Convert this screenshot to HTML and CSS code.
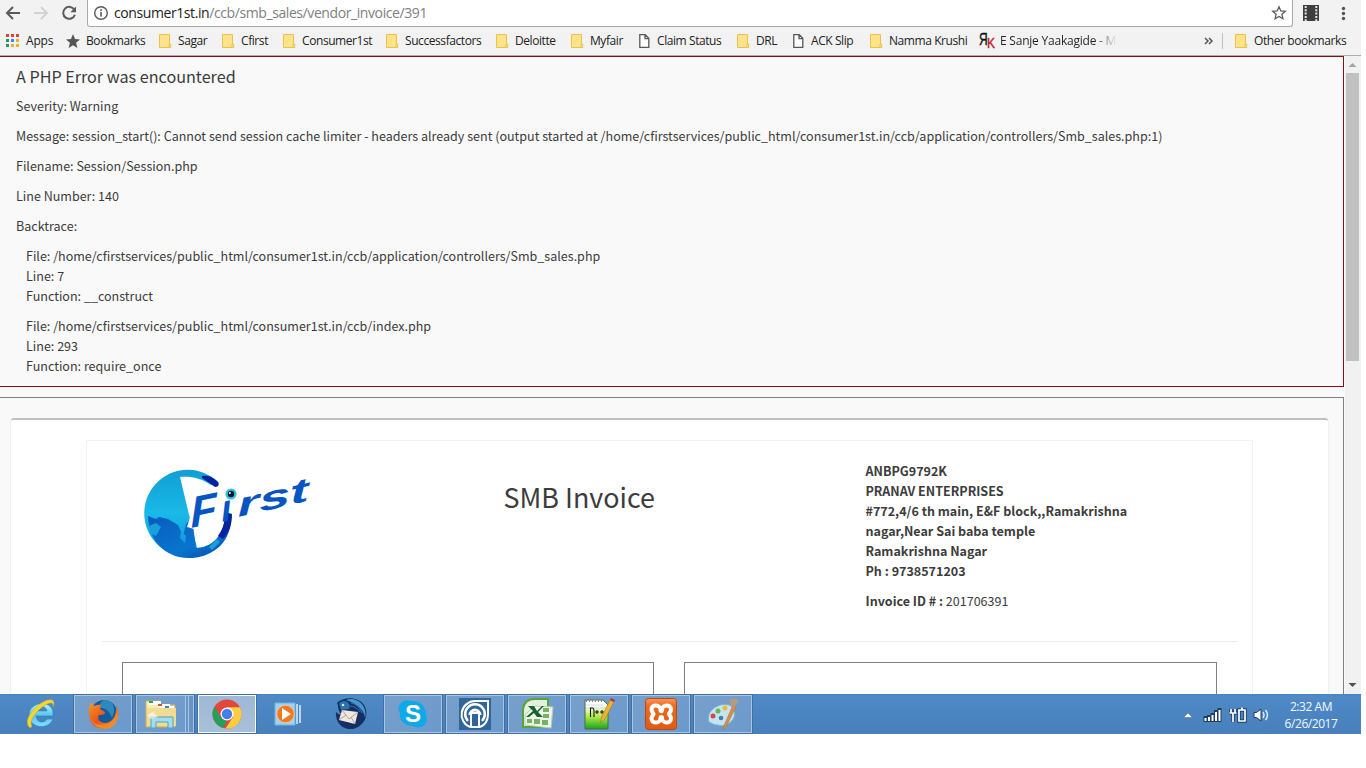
FILE: index.html
```html
<!DOCTYPE html>
<html lang="en">
<head>
<meta charset="utf-8">
<title>SMB Invoice</title>
<link rel="stylesheet" href="styles.css">
</head>
<body>
<svg class="defs" width="0" height="0">
  <defs>
    <symbol id="folder" viewBox="0 0 13 15"><path d="M.5.5h10v9.500h1.200v3.500H.5z" fill="#ffe38b" stroke="#e9c34c"/><path d="M10 10v3.500" stroke="#e9c34c"/></symbol>
    <symbol id="doc" viewBox="0 0 13 15"><path d="M.8.7h5.400l3.600 3.600v9.100H.8zM6 .7v3.900h3.800" fill="#fff" stroke="#58585a" stroke-width="1.300"/></symbol>
    <linearGradient id="globe" x2="0" y2="1"><stop stop-color="#119fd2"/><stop offset=".5" stop-color="#19b9e8"/><stop offset="1" stop-color="#1496d8"/></linearGradient>
    <linearGradient id="sea" x2="1" y2="1"><stop stop-color="#095bbd"/><stop offset=".6" stop-color="#0875cf"/><stop offset="1" stop-color="#0646a9"/></linearGradient>
    <linearGradient id="iceE" x2="0" y2="1"><stop stop-color="#bdf1ff"/><stop offset=".5" stop-color="#57c5ef"/><stop offset="1" stop-color="#86def8"/></linearGradient>
    <linearGradient id="fire" x2="1" y2="1"><stop stop-color="#f59b22"/><stop offset=".5" stop-color="#e9531c"/><stop offset="1" stop-color="#f5b32f"/></linearGradient>
    <linearGradient id="note" x2="0" y2="1"><stop offset=".2" stop-color="#fff"/><stop offset=".55" stop-color="#b7ec4b"/><stop offset="1" stop-color="#16a51b"/></linearGradient>
    <linearGradient id="orange" x2="0" y2="1"><stop stop-color="#fa955b"/><stop offset=".25" stop-color="#ee6a1d"/><stop offset="1" stop-color="#df5b13"/></linearGradient>
    <linearGradient id="manila" x2="0" y2="1"><stop stop-color="#fff4bd"/><stop offset="1" stop-color="#e9cf76"/></linearGradient>
  </defs>
</svg>
<div class="screen">
  <header class="chrome">
    <div class="toolbar">
      <svg class="nav" width="88" height="27" fill="none" stroke="#5a5a5a" stroke-width="2">
        <path d="M20 13H7.500M13 7l-6 6 6 6"/>
        <path d="M34 13h12.500M41 7l6 6-6 6" stroke="#d2d2d2"/>
        <path d="M74.500 10a6 6 0 1 0 .4 4.700"/><path d="M76 6.500v5.700h-5.700z" fill="#5a5a5a" stroke="none"/>
      </svg>
      <div class="omnibox">
        <svg class="info" width="16" height="16" fill="none" stroke="#5a5a5a"><circle cx="8" cy="8" r="6.300" stroke-width="1.400"/><path d="M8 7v4.500M8 4.200v1.700" stroke-width="1.600"/></svg>
        <span class="url">consumer1st.in<span class="path">/ccb/smb_sales/vendor_invoice/391</span></span>
        <svg class="fav" width="16" height="16"><path d="M8 1.800l1.800 4.100 4.500.4-3.400 3 1 4.400L8 11.400l-3.900 2.300 1-4.400-3.400-3 4.500-.4z" fill="none" stroke="#5a5a5a" stroke-width="1.300"/></svg>
      </div>
      <svg class="menu" width="68" height="27">
        <path d="M10 5h16v16H10z" fill="#3e3e3e"/><path d="M12.700 6v15M23.300 6v15" stroke="#e8e8e8" stroke-width="2" stroke-dasharray="2 1.300"/>
        <g fill="#555"><circle cx="50.500" cy="8.500" r="1.700"/><circle cx="50.500" cy="13.500" r="1.700"/><circle cx="50.500" cy="18.500" r="1.700"/></g>
      </svg>
    </div>
    <nav class="bookmarks">
      <a class="bm"><svg width="14" height="14"><path d="M0 0h3v3H0zM5 0h3v3H5zM10 0h3v3h-3z" fill="#db4437"/><path d="M0 5h3v3H0zM0 10h3v3H0z" fill="#229a59"/><path d="M5 5h3v3H5z" fill="#4285f4"/><path d="M10 5h3v3h-3zM5 10h3v3H5zM10 10h3v3h-3z" fill="#e8b026"/></svg><span class="apps">Apps</span></a>
      <a class="bm"><svg width="14" height="15"><path d="M7 0l2 5 5 .4-3.900 3.400L11.400 14 7 11.200 2.600 14l1.300-5.200L0 5.400 5 5z" fill="#555"/></svg><span>Bookmarks</span></a>
      <a class="bm"><svg width="13" height="15"><use href="#folder"/></svg><span>Sagar</span></a>
      <a class="bm"><svg width="13" height="15"><use href="#folder"/></svg><span>Cfirst</span></a>
      <a class="bm"><svg width="13" height="15"><use href="#folder"/></svg><span>Consumer1st</span></a>
      <a class="bm"><svg width="13" height="15"><use href="#folder"/></svg><span>Successfactors</span></a>
      <a class="bm"><svg width="13" height="15"><use href="#folder"/></svg><span>Deloitte</span></a>
      <a class="bm"><svg width="13" height="15"><use href="#folder"/></svg><span>Myfair</span></a>
      <a class="bm page"><svg width="13" height="15"><use href="#doc"/></svg><span>Claim Status</span></a>
      <a class="bm"><svg width="13" height="15"><use href="#folder"/></svg><span>DRL</span></a>
      <a class="bm page"><svg width="13" height="15"><use href="#doc"/></svg><span>ACK Slip</span></a>
      <a class="bm"><svg width="13" height="15"><use href="#folder"/></svg><span>Namma Krushi</span></a>
      <a class="bm rk"><b class="ya">Я</b><b class="ka">K</b><span class="fade">E Sanje Yaakagide - M</span></a>
      <svg width="10" height="9"><path d="M1 1l3 3-3 3M5 1l3 3-3 3" fill="none" stroke="#555" stroke-width="1.500"/></svg>
      <i class="rule"></i>
      <a class="bm"><svg width="13" height="15"><use href="#folder"/></svg><span>Other bookmarks</span></a>
    </nav>
  </header>

  <div class="viewport">
    <main class="page">
      <section class="error">
        <h4>A PHP Error was encountered</h4>
        <p>Severity: Warning</p>
        <p class="message">Message: session_start(): Cannot send session cache limiter - headers already sent (output started at /home/cfirstservices/public_html/consumer1st.in/ccb/application/controllers/Smb_sales.php:1)</p>
        <p>Filename: Session/Session.php</p>
        <p>Line Number: 140</p>
        <p>Backtrace:</p>
        <p class="trace">File: /home/cfirstservices/public_html/consumer1st.in/ccb/application/controllers/Smb_sales.php<br>Line: 7<br>Function: __construct</p>
        <p class="trace">File: /home/cfirstservices/public_html/consumer1st.in/ccb/index.php<br>Line: 293<br>Function: require_once</p>
      </section>
      <section class="wrapper">
        <div class="panel">
          <div class="invoice">
            <div class="head">
              <svg class="logo" width="190" height="106" viewBox="0 0 190 106">
                <path d="M75 24A43.500 43.500 0 1 0 87 59l-6-1C80 77 67 89 53 89L36 18c11-1 21 1 31 8z" fill="url(#globe)"/>
                <path d="M4 57l8 3 3-2 9 2 10 6 5 11 3-12 6-6 4 30C67 89 80 77 81 58l6 1C87 91 57 103 35 98 15 93 5 77 4 57z" fill="url(#sea)"/>
                <path d="M5 67l7-3 5 4-5 9-5-2zM37 72l5 5-1 7-5-5zM65 88l8-8 3 3-8 8z" fill="#189fdd"/>
                <path d="M58 19l13 9c4 0 5-3 2-6-5-5-10-6-15-5zM81 53c0 10-2 17-7 24l5 3c6-6 9-14 9-25z" fill="#0624a0"/>
                <path d="M43 68l12-38h24l-1 30h-22l-6 10z" fill="#fff"/>
                <g class="wordmark" fill="#0755c4">
                  <text transform="translate(47 69) rotate(-12) skewX(-10)" font-size="43" textLength="27" lengthAdjust="spacingAndGlyphs">F</text>
                  <text transform="translate(78 63) rotate(-12) skewX(-8)" font-size="37">ı</text>
                  <text transform="translate(94 58) rotate(-13) skewX(-10)" font-size="33" textLength="73" lengthAdjust="spacingAndGlyphs">rst</text>
                </g>
                <circle cx="87" cy="35" r="5.600" fill="#37bfe0"/><circle cx="87" cy="35" r="3.200" fill="#07182c"/><circle cx="85.800" cy="34" r="1" fill="#fff"/>
              </svg>
              <h2>SMB Invoice</h2>
              <address>
                <b>ANBPG9792K</b><b>PRANAV ENTERPRISES</b><b>#772,4/6 th main, E&amp;F block,,Ramakrishna nagar,Near Sai baba temple</b><b>Ramakrishna Nagar</b><b>Ph : 9738571203</b>
                <p><strong>Invoice ID # :</strong> 201706391</p>
              </address>
            </div>
            <hr>
            <div class="parties"><div></div><div></div></div>
          </div>
        </div>
      </section>
    </main>
    <div class="scrollbar">
      <svg width="16" height="17"><path d="M3.500 11L7.500 7l4 4z" fill="#a3a3a3"/></svg>
      <div class="thumb"></div>
      <svg class="down" width="16" height="17"><path d="M3.500 6l4 4 4-4z" fill="#505050"/></svg>
    </div>
  </div>

  <footer class="taskbar">
    <div class="task"><svg width="32" height="34"><path d="M28 19H11c1 8 9 7 11 3h6c-5 12-24 9-24-4S26 2 28 15zM11 14h11c-1-6-10-6-11 0z" fill="url(#iceE)" stroke="#2588c4" stroke-width=".6"/><path d="M4 30C-4 21 18 0 27 3c3 1 2 5 1 7 0-3 0-4-2-4C19 6 2 22 7 29c-1 2-2 2-3 1z" fill="#f5d52f" stroke="#bca52b" stroke-width=".5"/></svg></div>
    <div class="task open"><svg width="32" height="34"><circle cx="17" cy="16" r="13" fill="#175a9b"/><path d="M17 3c9 0 13 8 8 18-2-7-8-11-13-10l2-6z" fill="#2c88bd"/><path d="M4 5c-4 8-4 27 13 27 14 0 17-16 12-23 1 10-4 17-11 17-6 0-8-5-6-8 3 0 6 0 6-3l-5-3 1-4c-4-1-6 1-7 1z" fill="url(#fire)"/><path d="M4 21c4 11 22 10 26-6 0 11-5 16-13 16-7 0-12-4-13-10z" fill="#f28923"/></svg></div>
    <div class="task open stack"><svg width="34" height="34"><path d="M2 4h13l2 4h14v22H2z" fill="url(#manila)" stroke="#c8b163"/><path d="M5 4h12v4H5z" fill="#fff"/><path d="M5 4h4v2H5z" fill="#31a344"/><path d="M14 7h12v4H14z" fill="#fff"/><path d="M14 7h4v2h-4z" fill="#d65128"/><path d="M20 9h10v3H20z" fill="#fff"/><path d="M21 9h4v2h-4z" fill="#318ac8"/><path d="M3 11h29v18H3z" fill="#f2dc91"/><path d="M7 31V20h22v11h-5v-6H12v6z" fill="#a6dcef" stroke="#4ba3c6"/><path d="M3 18l6-3 5 5-7 2z" fill="#fff" opacity=".6"/></svg></div>
    <div class="task open active"><svg width="32" height="34"><circle cx="16" cy="17" r="14.500" fill="#e2473b"/><path d="M3.500 9.700L11 22l5 2-3.500 7A14.500 14.500 0 0 1 3.500 9.700z" fill="#23a05c"/><path d="M16 10.200h12.800A14.500 14.500 0 0 1 14.500 31.500L22 20z" fill="#fccc44"/><circle cx="16" cy="17" r="6.500" fill="#fff"/><circle cx="16" cy="17" r="5.200" fill="#427fed"/></svg></div>
    <div class="task"><svg width="32" height="34"><path d="M2 6h20v22H2z" fill="#a2d1ed" stroke="#6fb4df"/><path d="M24 7v20M27 8v18" stroke="#d7f2ff" stroke-width="1.500"/><circle cx="12.500" cy="17" r="8.800" fill="#ed7b23" stroke="#fac49b"/><path d="M9 11l9 6-9 6z" fill="#fff"/></svg></div>
    <div class="task"><svg width="34" height="34"><path d="M3 6C10-1 25 0 30 8c6 10 0 21-11 24C8 33 1 25 2 15c2 2 4 3 5 2C3 12 5 9 3 6z" fill="#152f62"/><path d="M12 3c11-4 22 6 19 18-1-9-8-14-19-18z" fill="#4598cb"/><path d="M5 6c7-5 12 0 10 6l-8 1z" fill="#2872ad"/><path d="M17 6c5 1 9 5 11 10M15 9c5 0 8 2 11 6" fill="none" stroke="#3379b5"/><path d="M8 13l16 2-3 12-16-4z" fill="#eee8df"/><path d="M8 13l7 9 9-7M5 23l7-5M17 20l4 7" fill="none" stroke="#afa49a"/><circle cx="9" cy="8" r="1.300" fill="#d9e8ee"/></svg></div>
    <div class="task open skype-task"><svg width="32" height="34"><path d="M4 7c4-5 8-4 11-3 9-1 15 5 15 14 2 5 0 12-6 12-3 1-5 0-7-1C8 29 3 23 4 16c-2-3-2-6 0-9z" fill="#10a9e8"/><text class="skype" x="9" y="25">S</text></svg></div>
    <div class="task open"><svg width="32" height="34"><path d="M0 1h32v32H0z" fill="#306699"/><g fill="none" stroke="#fff" stroke-width="2"><path d="M11 30A13.500 13.500 0 0 1 16 4h13v13c0 6-3 11-8 13"/><path d="M9 24a9.800 9.800 0 1 1 14 0" stroke-width="2.500"/><path d="M11 18a5 5 0 1 1 10 0" stroke-width="3"/><path d="M12 16h8v14h-8z" fill="#306699"/></g><circle cx="27" cy="6" r="1" fill="#306699"/></svg></div>
    <div class="task open"><svg width="34" height="34"><path d="M3 30V12C4 5 9 2 15 2h13v28z" fill="#e6efdf" stroke="#55a637" stroke-width="2"/><path d="M14 9l19 1-2 21-26-3V18z" fill="#edf4ea" stroke="#bad0b4"/><path d="M23 11h6v4h-6zM23 17h6v4h-6zM7 22h5v4H7zM14 22h6v5h-6zM22 23h6v5h-6z" fill="#7ab162"/><path d="M8 9h6l3 5 5-5h2l-6 6 5 5h-6l-3-4-5 4H6l7-6z" fill="#17612e"/></svg></div>
    <div class="task open"><svg width="34" height="34"><path d="M3 3h18l5 5v24H3z" fill="url(#note)" stroke="#516848"/><path d="M4 3.500h17" stroke="#888" stroke-width="3" stroke-dasharray="1 2"/><path d="M4 8h17M4 11h20" stroke="#d2dce3"/><path d="M8.500 20v-9h2c2 0 1.500 4 1.500 9M13 15h4M15 13v4M18 15h4M20 13v4" fill="none" stroke="#151515" stroke-width="1.100"/><path d="M18 26l2-7L28 3l4 2-9 17z" fill="#ebb334" stroke="#a67323" stroke-width=".6"/><path d="M28 3l1-2 4 2-1 2z" fill="#ac344c"/></svg></div>
    <div class="task open"><svg width="32" height="34"><rect x=".5" y="1.500" width="31" height="31" rx="3" fill="url(#orange)" stroke="#b84b14"/><path d="M15.500 13c0-6-9-6-9-.5 0 3 2 3.500 2 4.500s-2 1.500-2 4.500c0 5.500 9 5.500 9-.5 0-1.500 1.500-1.500 1.500 0 0 6 9 6 9 .5 0-3-2-3.500-2-4.500s2-1.500 2-4.500c0-5.500-9-5.500-9 .5 0 1.500-1.500 1.500-1.500 0z" fill="none" stroke="#fff" stroke-width="4"/></svg></div>
    <div class="task open"><svg width="34" height="34"><path d="M3 25C-1 14 13 5 23 8c9 4 7 17-4 20-5 2-7-1-10 0z" fill="#c4e4f0" stroke="#76b5d0"/><circle cx="7" cy="19" r="2.500" fill="#d84747"/><circle cx="12" cy="14" r="2.500" fill="#69b558"/><circle cx="19" cy="11" r="2.500" fill="#efb931"/><circle cx="15" cy="21" r="2.300" fill="#467eae"/><path d="M27 8l3 2-11 22-2-1z" fill="#db8d4a" stroke="#ad6733" stroke-width=".5"/><path d="M25 9c-1-3-2-5-1-7 4 1 5-2 8 1 0 3-3 4-3 8z" fill="#b69b7c"/></svg></div>
    <div class="tray">
      <svg width="90" height="20" fill="none"><path d="M.5 12.500L5 8l4.500 4.500z" fill="#fff" stroke="#315f91" stroke-width=".5"/><path d="M22.500 15v-2M26 15v-3M29.500 15v-5M33 15V7M36.500 15V5" stroke="#203e61" stroke-width="4" stroke-linecap="square"/><path d="M22.500 16v-3M26 16v-4M29.500 16v-6M33 16V7M36.500 16V5" stroke="#fff" stroke-width="2"/><path d="M48 4v4M52 4v4M46.500 8h7M50 8v9M56 5h6v11h-6z" stroke="#203e61" stroke-width="3.500"/><path d="M48 4v4M52 4v4M46.500 8h7M50 8v9M56 5h6v11h-6zM58 3.500h2" stroke="#fff" stroke-width="1.700"/><path d="M71 7.500h2.500L78 4v12l-4.500-3.500H71z" fill="#fff" stroke="#203e61"/><path d="M80 7q2 3 0 6M82.500 5q4 5 0 10" stroke="#eaf6ff" stroke-width="1.300"/></svg>
      <div class="clock"><span>2:32 AM</span><span>6/26/2017</span></div>
    </div>
  </footer>
</div>
</body>
</html>
```
FILE: styles.css
```css
* { box-sizing: border-box; }
body { margin: 0; background: #fff; overflow: hidden; }
.defs { position: absolute; }
.screen { width: 1361px; height: 734px; display: flex; flex-direction: column; font-family: "Open Sans", sans-serif; }

/* Browser frame */
.chrome { height: 56px; background: #f2f2f2; border-bottom: 1px solid #b1adad; flex: none; }
.toolbar { display: flex; height: 27px; }
.nav { flex: none; margin-right: -1px; }
.omnibox { width: 1206px; height: 27px; background: #fff; border: 1px solid #a9a9a9; border-top: 0; border-radius: 0 0 3px 3px; display: flex; align-items: center; padding-left: 5px; }
.url { margin-left: 5px; font-size: 14px; letter-spacing: -.41px; color: #222; line-height: 20px; white-space: nowrap; }
.path { color: #808080; }
.fav { margin-left: auto; margin-right: 5px; }
.menu { flex: none; }
.bookmarks { height: 28px; display: grid; grid-template-columns: 60px 93px 63px 61px 103px 110px 75px 68px 98px 56px 77px 109px 225px 18px 13px 120px; align-items: center; padding-left: 6px; }
.bm { display: flex; align-items: center; font-size: 12px; line-height: 20px; letter-spacing: -.42px; color: #222; white-space: nowrap; }
.bm svg { flex: none; margin-right: 6px; }
.bm.page svg { margin-right: 5px; }
.bm .apps { letter-spacing: -.2px; }
.ya { font: 16px/18px "Liberation Sans", sans-serif; -webkit-text-stroke: .4px; transform: translateY(-1px) scaleX(.75); transform-origin: 0 0; width: 8px; color: #111; }
.ka { font: 15px/18px "Liberation Sans", sans-serif; -webkit-text-stroke: .4px; transform: translateY(2px) scaleX(.8); transform-origin: 0 0; width: 13px; color: #c51c24; }
.fade { color: transparent; letter-spacing: -.22px; background: linear-gradient(90deg, #222 95px, #f2f2f2 117px); background-clip: text; -webkit-background-clip: text; width: 117px; overflow: hidden; }
.rule { height: 16px; width: 1px; background: #c0c0c0; }

/* Page */
.viewport { display: flex; height: 638px; flex: none; background: #f9f9f9; overflow: hidden; }
main.page { width: 1344px; flex: none; font: 12.54px/20px "Noto Sans CJK SC", sans-serif; color: #3c3c3c; }
.error { border: 1px solid #801216; border-left: 0; padding: 9px 0 0 16px; height: 331px; }
.error h4 { font-size: 16.15px; font-weight: 400; line-height: 20px; margin: 0 0 10px; }
.error p { margin: 0 0 10px; white-space: nowrap; }
.error .trace { margin-left: 10px; }
.wrapper { margin-top: 10px; border: 1px solid #808080; border-left: 0; padding: 20px 15px 0 11px; height: 340px; }
.panel { background: #fff; border-top: 2px solid #c1c1c1; border-radius: 3px; box-shadow: 0 1px 2px #0002; height: 340px; padding: 20px 75px 0; }
.invoice { border: 1px solid #f2f2f2; height: 340px; padding: 0 14px 0 15px; }
.head { height: 200px; display: grid; grid-template-columns: 361px 364px 300px; padding-left: 37px; }
.logo { margin: 18px 0 0 5px; }
.wordmark { font-family: "Liberation Sans", sans-serif; font-style: italic; font-weight: bold; }
h2 { margin: 39px 0 0 3.500px; font-size: 26.9px; line-height: 34px; font-weight: 400; }
address { font-style: normal; padding: 20px 0 0 1.500px; width: 270px; }
address b { display: block; }
address p { margin: 10px 0 0; }
hr { border: 0; border-top: 1px solid #eee; margin: 0; }
.parties { display: grid; grid-template-columns: 532px 533px; gap: 30px; padding: 20px 0 0 20px; }
.parties div { height: 100px; border: 1px solid #808080; }
.scrollbar { width: 17px; background: #f1f1f1; border-left: 1px solid #f9f9f9; display: flex; flex-direction: column; }
.scrollbar svg { flex: none; }
.thumb { width: 13px; height: 288px; margin-left: 1px; background: #c1c1c1; }
.down { margin-top: auto; }

/* Taskbar */
.taskbar { height: 40px; flex: none; background: linear-gradient(#4484bf, #4f89c6 2px, #4780bb); display: flex; padding: 1px 0 0 12px; }
.task { width: 58px; height: 38px; margin-right: 4px; display: flex; align-items: center; justify-content: center; flex: none; }
.open { background: linear-gradient(135deg, #789fcb, #6b9acb); border: 1px solid #a8c6e4; outline: 1px solid #426f9f; }
.stack { box-shadow: inset -4px 0 #6894c3, inset -5px 0 #a8c6e4, inset -7px 0 #6894c3, inset -8px 0 #a8c6e4; padding-right: 8px; }
.active { background: linear-gradient(#9eb8d5, #a9bfd9); border-color: #f4fbff; }
.skype-task { padding-right: 3px; }
.skype { font: bold 24px "Liberation Sans", sans-serif; fill: #fff; }
.tray { margin-left: auto; display: flex; align-items: center; padding-right: 23px; }
.clock { display: flex; flex-direction: column; align-items: center; width: 54px; margin-left: 11px; color: #f1f8ff; font-size: 12px; line-height: 17px; letter-spacing: -.45px; white-space: nowrap; padding-top: 1px; }
```
